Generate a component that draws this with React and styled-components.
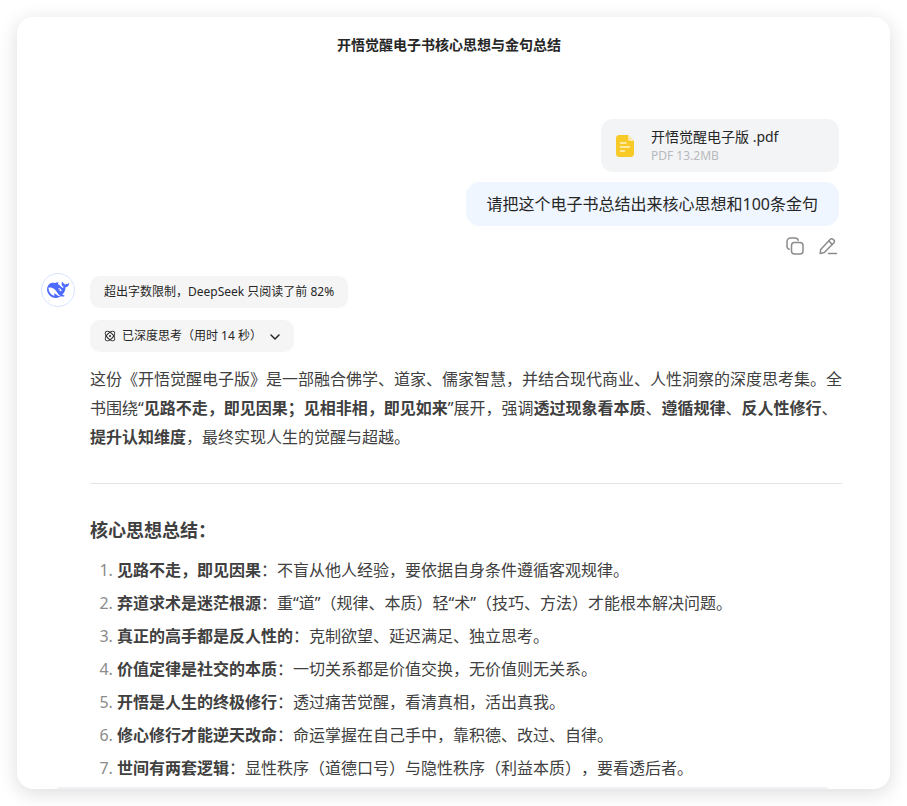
import React from "react";
import styled, { createGlobalStyle } from "styled-components";

const GlobalStyle = createGlobalStyle`
  * {
    box-sizing: border-box;
  }

  body {
    margin: 0;
    background-color: #ffffff;
    color: #404040;
    font-family: "Noto Sans", "Noto Sans CJK SC", sans-serif;
    font-size: 16px;
    text-spacing-trim: space-all;
  }

  button {
    border: none;
    padding: 0;
    background: none;
    color: inherit;
    font-family: inherit;
    cursor: pointer;
  }
`;

const Page = styled.div`
  height: 100vh;
  padding: 17px;
`;

const Window = styled.main`
  height: 100%;
  display: flex;
  flex-direction: column;
  border-radius: 16px;
  overflow: hidden;
  background-color: white;
  box-shadow: 0 4px 20px rgba(0, 0, 0, 0.14);
`;

const Header = styled.header`
  flex: none;
  height: 56px;
  padding-right: 9px;
  display: flex;
  justify-content: center;
  align-items: center;
`;

const Title = styled.h1`
  margin: 0;
  font-size: 14px;
  line-height: 20px;
  font-weight: bold;
  color: #262626;
`;

const Messages = styled.div`
  flex: 1;
  min-height: 0;
  overflow: hidden;
  padding: 46px 48px 0 24px;
`;

const UserMessage = styled.section`
  padding-right: 3px;
  display: flex;
  flex-direction: column;
  align-items: flex-end;
`;

const FileCard = styled.div`
  width: 238px;
  height: 53px;
  padding: 0 14px;
  display: flex;
  align-items: center;
  gap: 16px;
  border-radius: 12px;
  background-color: #f3f4f6;
`;

const FileName = styled.div`
  font-size: 14px;
  line-height: 20px;
  color: #262626;
`;

const FileMeta = styled.div`
  font-size: 12px;
  line-height: 17px;
  color: #b8babd;
`;

const Bubble = styled.p`
  margin: 10px 0 0;
  padding: 8px 21px;
  border-radius: 14px;
  line-height: 28px;
  color: #262626;
  background-color: #eff6ff;
`;

const Actions = styled.div`
  margin-top: 10px;
  padding-right: 1px;
  display: flex;
  gap: 13px;
  color: #8b8b8b;
`;

const IconButton = styled.button`
  width: 20px;
  height: 20px;
  display: flex;
  justify-content: center;
  align-items: center;
`;

const Reply = styled.section`
  margin-top: 20px;
  display: flex;
  gap: 15px;
`;

const Avatar = styled.div`
  flex: none;
  width: 34px;
  height: 34px;
  margin-top: -3px;
  display: flex;
  justify-content: center;
  align-items: center;
  border: 1px solid #d5e4ff;
  border-radius: 50%;
`;

const ReplyBody = styled.div`
  flex: 1;
  min-width: 0;
`;

const Pills = styled.div`
  display: flex;
  flex-direction: column;
  align-items: flex-start;
  gap: 12px;
`;

const Pill = styled.div`
  height: 32px;
  padding: 0 14px;
  display: flex;
  align-items: center;
  gap: 6px;
  border-radius: 10px;
  font-size: 12px;
  line-height: 20px;
  color: #262626;
  background-color: #f5f5f5;
`;

const Paragraph = styled.p`
  margin: 13px 0 0;
  line-height: 29px;
`;

const Divider = styled.hr`
  height: 1px;
  margin: 31px 0 32px;
  border: none;
  background-color: #e5e5e5;
`;

const Heading = styled.h3`
  margin: 0;
  font-size: 18px;
  line-height: 28px;
  font-weight: bold;
`;

const List = styled.ol`
  margin: 12px 0 0;
  padding-left: 27px;
  display: flex;
  flex-direction: column;
  gap: 4px;
`;

const Item = styled.li`
  line-height: 29px;

  &::marker {
    color: #8b8b8b;
  }
`;

// only the top edge of the input box is in view
const Composer = styled.div`
  flex: none;
  height: 2px;
  margin: 0 62px 0 40px;
  border-radius: 24px 24px 0 0;
  background-color: #f0f1f4;
`;

const ideas = [
  { name: "见路不走，即见因果", text: "不盲从他人经验，要依据自身条件遵循客观规律。" },
  { name: "弃道求术是迷茫根源", text: "重“道”（规律、本质）轻“术”（技巧、方法）才能根本解决问题。" },
  { name: "真正的高手都是反人性的", text: "克制欲望、延迟满足、独立思考。" },
  { name: "价值定律是社交的本质", text: "一切关系都是价值交换，无价值则无关系。" },
  { name: "开悟是人生的终极修行", text: "透过痛苦觉醒，看清真相，活出真我。" },
  { name: "修心修行才能逆天改命", text: "命运掌握在自己手中，靠积德、改过、自律。" },
  { name: "世间有两套逻辑", text: "显性秩序（道德口号）与隐性秩序（利益本质），要看透后者。" },
];

function FileIcon() {
  return (
    <svg width="20" height="24" viewBox="0 0 20 24" fill="none">
      <path d="M4.500 1H13l6 6v12.500a3.500 3.500 0 0 1-3.500 3.500h-11A3.500 3.500 0 0 1 1 19.500v-15A3.500 3.500 0 0 1 4.500 1z" fill="#f8ca27" />
      <path d="M13 1l6 6h-3.500A2.500 2.500 0 0 1 13 4.500z" fill="#fdeab0" />
      <path d="M5.500 9h5.500M5.500 13h9M5.500 17h4" stroke="#fff3cd" strokeWidth="1.500" strokeLinecap="round" />
    </svg>
  );
}

function CopyIcon() {
  return (
    <svg width="20" height="20" viewBox="0 0 20 20" fill="none" stroke="currentColor" strokeWidth="1.500">
      <rect x="6.500" y="6.500" width="11.500" height="11.500" rx="3" />
      <path d="M4.200 13.200A3 3 0 0 1 2 10.300V5.500A3.500 3.500 0 0 1 5.500 2h4.800a3 3 0 0 1 2.900 2.200" strokeLinecap="round" />
    </svg>
  );
}

function EditIcon() {
  return (
    <svg width="20" height="20" viewBox="0 0 20 20" fill="none" stroke="currentColor" strokeWidth="1.500" strokeLinejoin="round">
      <path d="M2.200 17.500l.5-4.100L12.300 3.200a1.900 1.900 0 0 1 2.700 0l.9.900a1.900 1.900 0 0 1 0 2.700L6.300 16.600z" />
      <path d="M10.800 5l3.400 3.400M10.500 17.500h8" strokeLinecap="round" />
    </svg>
  );
}

function WhaleIcon() {
  return (
    <svg width="22" height="22" viewBox="0 0 24 24" fill="#4d6bfe">
      <path d="M23.748 4.482c-.254-.124-.364.113-.512.234-.051.039-.094.09-.137.136-.372.397-.806.657-1.373.626-.829-.046-1.537.214-2.163.848-.133-.782-.575-1.248-1.247-1.548-.352-.156-.708-.311-.955-.65-.172-.241-.219-.51-.305-.774-.055-.16-.11-.323-.293-.35-.2-.031-.278.136-.356.276-.313.572-.434 1.202-.422 1.84.027 1.436.633 2.58 1.838 3.393.137.093.172.187.129.323-.082.28-.18.552-.266.833-.055.179-.137.217-.329.14a5.526 5.526 0 01-1.736-1.18c-.857-.828-1.631-1.742-2.597-2.458a11.365 11.365 0 00-.689-.471c-.985-.957.13-1.743.388-1.836.27-.098.093-.432-.779-.428-.872.004-1.67.295-2.687.684a3.055 3.055 0 01-.465.137 9.597 9.597 0 00-2.883-.102c-1.885.21-3.39 1.102-4.497 2.623C.082 8.606-.231 10.684.152 12.85c.403 2.284 1.569 4.175 3.36 5.653 1.858 1.533 3.997 2.284 6.438 2.14 1.482-.085 3.133-.284 4.994-1.86.47.234.962.327 1.78.397.63.059 1.236-.03 1.705-.128.735-.156.684-.837.419-.961-2.155-1.004-1.682-.595-2.113-.926 1.096-1.296 2.746-2.642 3.392-7.003.05-.347.007-.565 0-.845-.004-.17.035-.237.23-.256a4.173 4.173 0 001.545-.475c1.396-.763 1.96-2.015 2.093-3.517.02-.23-.004-.467-.247-.588zM11.581 18c-2.089-1.642-3.102-2.183-3.52-2.16-.392.024-.321.471-.235.763.09.288.207.486.371.739.114.167.192.416-.113.603-.673.416-1.842-.14-1.897-.167-1.361-.802-2.5-1.86-3.301-3.307-.774-1.393-1.224-2.887-1.298-4.482-.02-.386.093-.522.477-.592a4.696 4.696 0 011.529-.039c2.132.312 3.946 1.265 5.468 2.774.868.86 1.525 1.887 2.202 2.891.72 1.066 1.494 2.082 2.48 2.914.348.292.625.514.891.677-.802.09-2.14.11-3.054-.614zm1-6.44a.306.306 0 01.415-.287.302.302 0 01.2.288.306.306 0 01-.31.307.303.303 0 01-.304-.308zm3.11 1.596c-.2.081-.399.151-.59.16a1.245 1.245 0 01-.798-.254c-.274-.23-.47-.358-.552-.758a1.73 1.73 0 01.016-.588c.07-.327-.008-.537-.239-.727-.187-.156-.426-.199-.688-.199a.559.559 0 01-.254-.078c-.11-.054-.2-.19-.114-.358.028-.054.16-.186.192-.21.356-.202.767-.136 1.146.016.352.144.618.408 1.001.782.391.451.462.576.685.914.176.265.336.537.445.848.067.195-.019.354-.25.452z" />
    </svg>
  );
}

function ThinkIcon() {
  return (
    <svg width="12" height="12" viewBox="0 0 12 12" fill="none" stroke="currentColor">
      <ellipse cx="6" cy="6" rx="6" ry="3" transform="rotate(45 6 6)" />
      <ellipse cx="6" cy="6" rx="6" ry="3" transform="rotate(-45 6 6)" />
      <circle cx="6" cy="6" r="1" fill="currentColor" stroke="none" />
    </svg>
  );
}

function ChevronIcon() {
  return (
    <svg width="12" height="10" viewBox="0 0 12 10" fill="none" stroke="currentColor" strokeWidth="1.500">
      <path d="M3 4l4 4 4-4" strokeLinecap="round" strokeLinejoin="round" />
    </svg>
  );
}

function App() {
  return (
    <>
      <GlobalStyle />
      <Page>
        <Window>
          <Header>
            <Title>开悟觉醒电子书核心思想与金句总结</Title>
          </Header>
          <Messages>
            <UserMessage>
              <FileCard>
                <FileIcon />
                <div>
                  <FileName>开悟觉醒电子版 .pdf</FileName>
                  <FileMeta>PDF 13.2MB</FileMeta>
                </div>
              </FileCard>
              <Bubble>请把这个电子书总结出来核心思想和100条金句</Bubble>
              <Actions>
                <IconButton type="button" aria-label="复制">
                  <CopyIcon />
                </IconButton>
                <IconButton type="button" aria-label="编辑">
                  <EditIcon />
                </IconButton>
              </Actions>
            </UserMessage>
            <Reply>
              <Avatar>
                <WhaleIcon />
              </Avatar>
              <ReplyBody>
                <Pills>
                  <Pill>超出字数限制，DeepSeek 只阅读了前 82%</Pill>
                  <Pill as="button" type="button">
                    <ThinkIcon />
                    <span>已深度思考（用时 14 秒）</span>
                    <ChevronIcon />
                  </Pill>
                </Pills>
                <Paragraph>
                  这份《开悟觉醒电子版》是一部融合佛学、道家、儒家智慧，并结合现代商业、人性洞察的深度思考集。全书围绕“
                  <strong>见路不走，即见因果；见相非相，即见如来</strong>
                  ”展开，强调<strong>透过现象看本质</strong>、<strong>遵循规律</strong>、
                  <strong>反人性修行</strong>、<strong>提升认知维度</strong>
                  ，最终实现人生的觉醒与超越。
                </Paragraph>
                <Divider />
                <Heading>核心思想总结：</Heading>
                <List>
                  {ideas.map((idea) => (
                    <Item key={idea.name}>
                      <strong>{idea.name}</strong>：{idea.text}
                    </Item>
                  ))}
                </List>
              </ReplyBody>
            </Reply>
          </Messages>
          <Composer />
        </Window>
      </Page>
    </>
  );
}

export default App;
